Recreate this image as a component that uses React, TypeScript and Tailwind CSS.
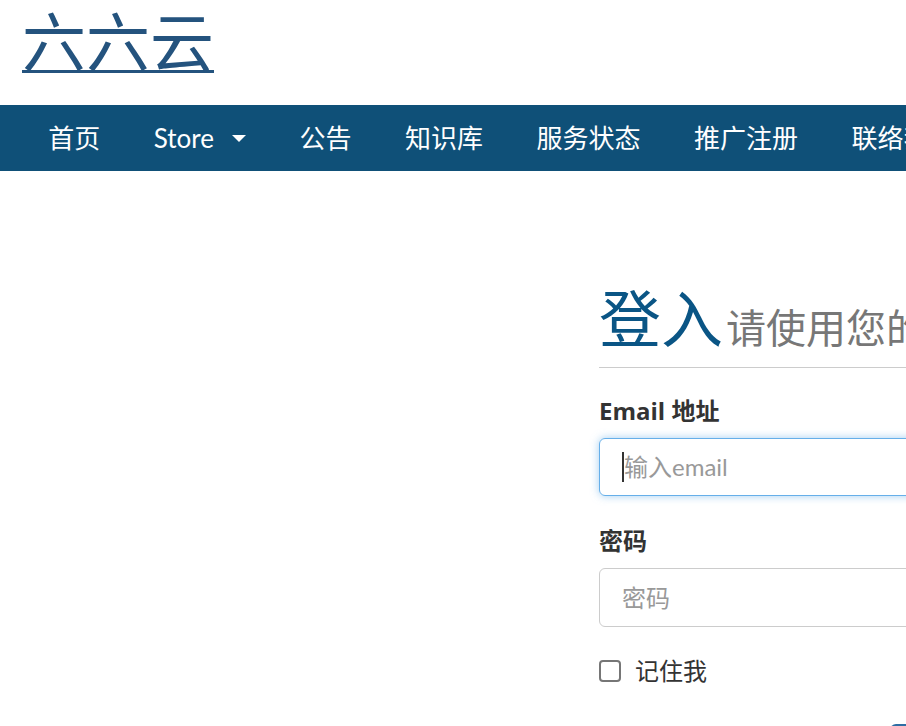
import React from 'react';

const cjk = '"Lato", "Noto Sans CJK SC", sans-serif';

const navItems = ['首页', 'Store', '公告', '知识库', '服务状态', '推广注册', '联络我们'];

const Caret = () => (
  <svg width="14" height="7" viewBox="0 0 14 7" className="ml-[18px] inline-block">
    <path d="M0 0 L14 0 L7 7 Z" fill="#ffffff" />
  </svg>
);

export default function App() {
  return (
    <div className="w-[906px] h-[726px] overflow-hidden bg-white" style={{ fontFamily: cjk }}>
      {/* header */}
      <div className="h-[105px] pl-[22px]">
        <a href="#" className="text-[64px] leading-[76px] text-[#24537e] underline decoration-[3px] underline-offset-[4px] whitespace-nowrap" style={{ fontFamily: '"Noto Sans CJK SC", sans-serif' }}>
          六六云
        </a>
      </div>

      {/* navbar */}
      <nav className="h-[66px] bg-[#0f5078] flex items-center pl-[21.5px] whitespace-nowrap">
        {navItems.map((item) => (
          <a key={item} href="#" className="px-[26.75px] text-[26px] leading-[66px] text-white flex items-center shrink-0">
            {item}
            {item === 'Store' && <Caret />}
          </a>
        ))}
      </nav>

      {/* content */}
      <div className="flex pt-[108px]">
        <div className="w-[599px] shrink-0" />
        <div className="w-[620px] shrink-0">
          <div className="flex items-baseline whitespace-nowrap pb-[8px] border-b border-[#cccccc]">
            <h1 className="text-[62px] leading-[80px] text-[#0a5585]">登入</h1>
            <span className="ml-[3px] text-[40px] text-[#777777]">请使用您的账号登录</span>
          </div>

          <form className="mt-[26px]">
            <label className="block text-[24px] font-bold text-[#333333] leading-[34px]" style={{ fontFamily: '"Open Sans", "Noto Sans CJK SC", sans-serif' }}>Email 地址</label>
            <div className="mt-[10px] h-[58px] rounded-[6px] border border-[#66afe9] shadow-[0_0_8px_rgba(102,175,233,0.6)] flex items-center px-[22px]">
              <span className="w-[2px] h-[30px] bg-[#333333]" />
              <span className="text-[24px] text-[#999999]">输入email</span>
            </div>

            <label className="block mt-[28px] text-[24px] font-bold text-[#333333] leading-[34px]">密码</label>
            <div className="mt-[10px] h-[59px] rounded-[6px] border border-[#cccccc] flex items-center px-[22px]">
              <span className="text-[24px] text-[#999999]">密码</span>
            </div>

            <div className="mt-[27px] flex items-center">
              <span className="w-[22px] h-[22px] rounded-[4px] border-2 border-[#767676] bg-white" />
              <span className="ml-[14px] text-[24px] text-[#333333] leading-[34px]">记住我</span>
            </div>

            <div className="mt-[36px] flex">
              <button type="button" className="ml-[291px] w-[120px] h-[50px] rounded-[6px] bg-[#2e6da4] text-white text-[24px]">登入</button>
            </div>
          </form>
        </div>
      </div>
    </div>
  );
}
